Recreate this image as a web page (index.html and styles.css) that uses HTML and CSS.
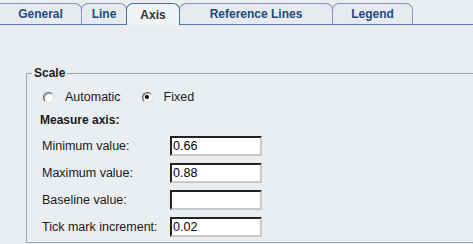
FILE: index.html
```html
<!DOCTYPE html>
<html lang="en">
<head>
    <meta charset="UTF-8">
    <meta name="viewport" content="width=device-width, initial-scale=1.0">
    <title>Axis</title>

    <link rel="stylesheet" href="styles.css">

</head>
<body>
    <nav class="tabs">
        <a class="tab tab-general">General</a>
        <a class="tab tab-line">Line</a>
        <a class="tab tab-axis active">Axis</a>
        <a class="tab tab-ref">Reference Lines</a>
        <a class="tab tab-legend">Legend</a>
    </nav>

    <main class="panel">
        <fieldset class="group">
            <legend>Scale</legend>

            <div class="radios">
                <label class="radio"><span class="dot"></span>Automatic</label>
                <label class="radio"><span class="dot checked"></span>Fixed</label>
            </div>

            <p class="subtitle">Measure axis:</p>

            <div class="form">
                <label>Minimum value:</label>
                <input type="text" value="0.66">

                <label>Maximum value:</label>
                <input type="text" value="0.88">

                <label>Baseline value:</label>
                <input type="text" value="">

                <label>Tick mark increment:</label>
                <input type="text" value="0.02">
            </div>
        </fieldset>
    </main>
</body>
</html>
```

FILE: styles.css
```css
html{
    box-sizing: border-box;
    font-family: "Liberation Sans", Arial, sans-serif;
    font-size: 12px;
}

*, *::after, *::before{
    box-sizing: inherit;
}

body{
    margin: 0;
    overflow: hidden;
    color: #1a1a1a;
    background: repeating-conic-gradient(#e7ebee 0 25%, #edf0f2 0 50%) 0 0 / 2px 2px;
}

/* Tabs */
.tabs{
    display: flex;
    height: 25px;
    padding-top: 3px;
    border-bottom: 1px solid #5a78a6;
}

.tab{
    display: flex;
    justify-content: center;
    align-items: center;
    height: 21px;
    margin-right: -1px;
    border: 1px solid #8497b8;
    border-bottom: none;
    border-radius: 7px 7px 0 0;
    font-weight: bold;
    color: #234a7c;
    background: repeating-conic-gradient(#e3e8ed 0 25%, #e9edf1 0 50%) 0 0 / 2px 2px;
}

.tab-general{
    width: 82px;
    border-left: none;
    border-top-left-radius: 0;
}
.tab-line{ width: 46px; }
.tab-axis{ width: 54px; }
.tab-ref{ width: 154px; }
.tab-legend{ width: 81px; }

.tab.active{
    height: 22px;
    margin-bottom: -1px;
    border-color: #4f6e9e;
    color: #333;
    background: repeating-conic-gradient(#eef1f3 0 25%, #f3f5f6 0 50%) 0 0 / 2px 2px;
    position: relative;
    z-index: 1;
}

/* Group box */
.panel{
    padding-top: 41px;
    padding-left: 26px;
}

.group{
    margin: 0;
    padding: 10px 0 5px 0;
    border: 1px solid #a3a6a9;
    border-right: none;
}

.group legend{
    margin-left: 5px;
    padding: 0 2px;
    font-weight: bold;
    line-height: 14px;
}

.radios{
    display: flex;
    gap: 21px;
    padding-left: 16px;
    line-height: 14px;
    font-size: 12.5px;
}

.radio{
    display: flex;
    align-items: center;
    gap: 11px;
}

.dot{
    display: inline-flex;
    justify-content: center;
    align-items: center;
    width: 11px;
    height: 11px;
    border-radius: 50%;
    border: 1px solid;
    border-color: #5c5c5c #e0e0e0 #e0e0e0 #5c5c5c;
    background: #fff;
    box-shadow: inset 1px 1px 1px #aaa;
}

.dot.checked::after{
    content: "";
    width: 4px;
    height: 4px;
    border-radius: 50%;
    background: #000;
}

.subtitle{
    margin: 9px 0 9px 13px;
    font-weight: bold;
    line-height: 14px;
}

.form{
    display: grid;
    grid-template-columns: 128px 92px;
    grid-auto-rows: 20px;
    row-gap: 7px;
    align-items: center;
    padding-left: 15px;
    font-size: 12.5px;
}

.form input{
    width: 92px;
    height: 20px;
    margin: 0;
    padding: 0 1px;
    border: 2px solid;
    border-color: #222 #c8c8c8 #c8c8c8 #222;
    background: #fff;
    font-family: inherit;
    font-size: 12.5px;
    color: #000;
}
```
